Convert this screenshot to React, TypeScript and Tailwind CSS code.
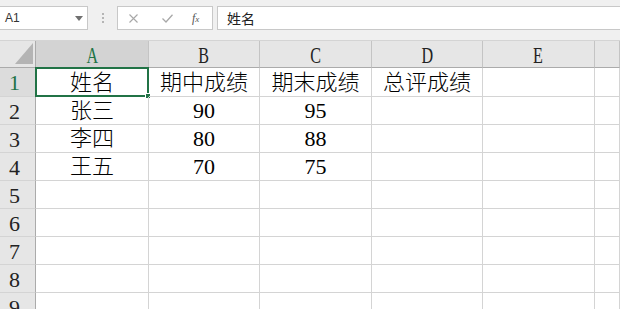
import React from "react";

const cols = ["A", "B", "C", "D", "E", ""];
const widths = ["w-[113px]", "w-[111px]", "w-[112px]", "w-[111px]", "w-[112px]", "w-[25px]"];

const data: string[][] = [
  ["姓名", "期中成绩", "期末成绩", "总评成绩", "", ""],
  ["张三", "90", "95", "", "", ""],
  ["李四", "80", "88", "", "", ""],
  ["王五", "70", "75", "", "", ""],
  ["", "", "", "", "", ""],
  ["", "", "", "", "", ""],
  ["", "", "", "", "", ""],
  ["", "", "", "", "", ""],
  ["", "", "", "", "", ""],
];

const cellFont = { fontFamily: '"Liberation Serif", "Noto Sans CJK SC", serif' };

function Toolbar() {
  return (
    <div className="h-[40px] bg-[#f0f0f0] flex items-start pt-[6px] gap-0">
      <div className="w-[88px] h-[24px] bg-white border border-[#c8c8c8] border-l-0 flex items-center justify-between pl-[5px] pr-[4px]">
        <span className="text-[12px] text-[#333]" style={{ fontFamily: '"Liberation Sans", sans-serif' }}>A1</span>
        <svg width="8" height="5" viewBox="0 0 8 5"><path d="M0 0h8L4 5z" fill="#707070" /></svg>
      </div>
      <div className="w-[29px] h-[24px] flex flex-col items-center justify-center gap-[2px]">
        <span className="w-[2px] h-[2px] bg-[#b5b5b5]" />
        <span className="w-[2px] h-[2px] bg-[#b5b5b5]" />
        <span className="w-[2px] h-[2px] bg-[#b5b5b5]" />
      </div>
      <div className="w-[96px] h-[24px] bg-white border border-[#c8c8c8] flex items-center">
        <svg className="ml-[11px]" width="9" height="9" viewBox="0 0 9 9">
          <path d="M0.5 0.5l8 8M8.5 0.5l-8 8" stroke="#a8a8a8" strokeWidth="1.1" />
        </svg>
        <svg className="ml-[24px]" width="11" height="9" viewBox="0 0 11 9">
          <path d="M0.5 4.5l3.5 3.5L10.5 0.8" stroke="#a8a8a8" strokeWidth="1.3" fill="none" />
        </svg>
        <span className="ml-[19px] text-[12px] italic text-[#555]" style={{ fontFamily: '"Liberation Serif", serif' }}>
          f<span className="text-[9px]">x</span>
        </span>
      </div>
      <div className="flex-1 ml-[4px] h-[24px] bg-white border border-[#c8c8c8] border-r-0 flex items-center pl-[9px]">
        <span className="text-[14px] text-[#222]" style={{ fontFamily: '"Noto Sans CJK SC", sans-serif' }}>姓名</span>
      </div>
    </div>
  );
}

function HeaderRow() {
  return (
    <div className="flex h-[28px] bg-[#e6e6e6] border-t border-[#d4d4d4]">
      <div className="w-[36px] shrink-0 relative border-r border-b border-[#ababab]">
        <svg className="absolute left-0 top-0" width="36" height="27" viewBox="0 0 36 27">
          <path d="M33 2L33 23L15 23Z" fill="#b4b4b4" />
        </svg>
      </div>
      {cols.map((c, i) => (
        <div
          key={i}
          className={`${widths[i]} shrink-0 flex items-center justify-center border-r border-[#c4c4c4] border-b ${
            i === 0 ? "bg-[#d3d3d3] border-b-[#217346] text-[#217346]" : "border-b-[#ababab] text-[#222]"
          }`}
          style={cellFont}
        >
          <span className="inline-block text-[23px] leading-none scale-x-[0.7] pt-[3px]">{c}</span>
        </div>
      ))}
    </div>
  );
}

function Row({ n, cells }: { n: number; cells: string[] }) {
  const h = n === 1 ? "h-[29px]" : "h-[28px]";
  return (
    <div className={`flex ${h}`}>
      <div
        className={`w-[36px] shrink-0 flex items-center justify-center pr-[6px] border-r border-b border-r-[#ababab] border-b-[#d4d4d4] text-[22px] leading-none ${
          n === 1 ? "bg-[#dcdcdc] text-[#217346]" : "bg-[#e6e6e6] text-[#222]"
        }`}
        style={cellFont}
      >
        <span className="pt-[2px]">{n}</span>
      </div>
      {cells.map((v, i) => (
        <div
          key={i}
          className={`${widths[i]} shrink-0 relative flex items-center justify-center border-r border-b border-[#d4d4d4] text-[22px] leading-none font-light text-black`}
          style={cellFont}
        >
          <span className="pt-[1px]">{v}</span>
          {n === 1 && i === 0 && (
            <div className="absolute -left-px -top-px -right-px -bottom-px border-2 border-[#217346]">
              <div className="absolute -right-[4px] -bottom-[4px] w-[6px] h-[6px] bg-[#217346] border border-white" />
            </div>
          )}
        </div>
      ))}
    </div>
  );
}

export default function App() {
  return (
    <div className="w-[620px] h-[309px] overflow-hidden bg-white">
      <Toolbar />
      <HeaderRow />
      {data.map((r, i) => (
        <Row key={i} n={i + 1} cells={r} />
      ))}
    </div>
  );
}
